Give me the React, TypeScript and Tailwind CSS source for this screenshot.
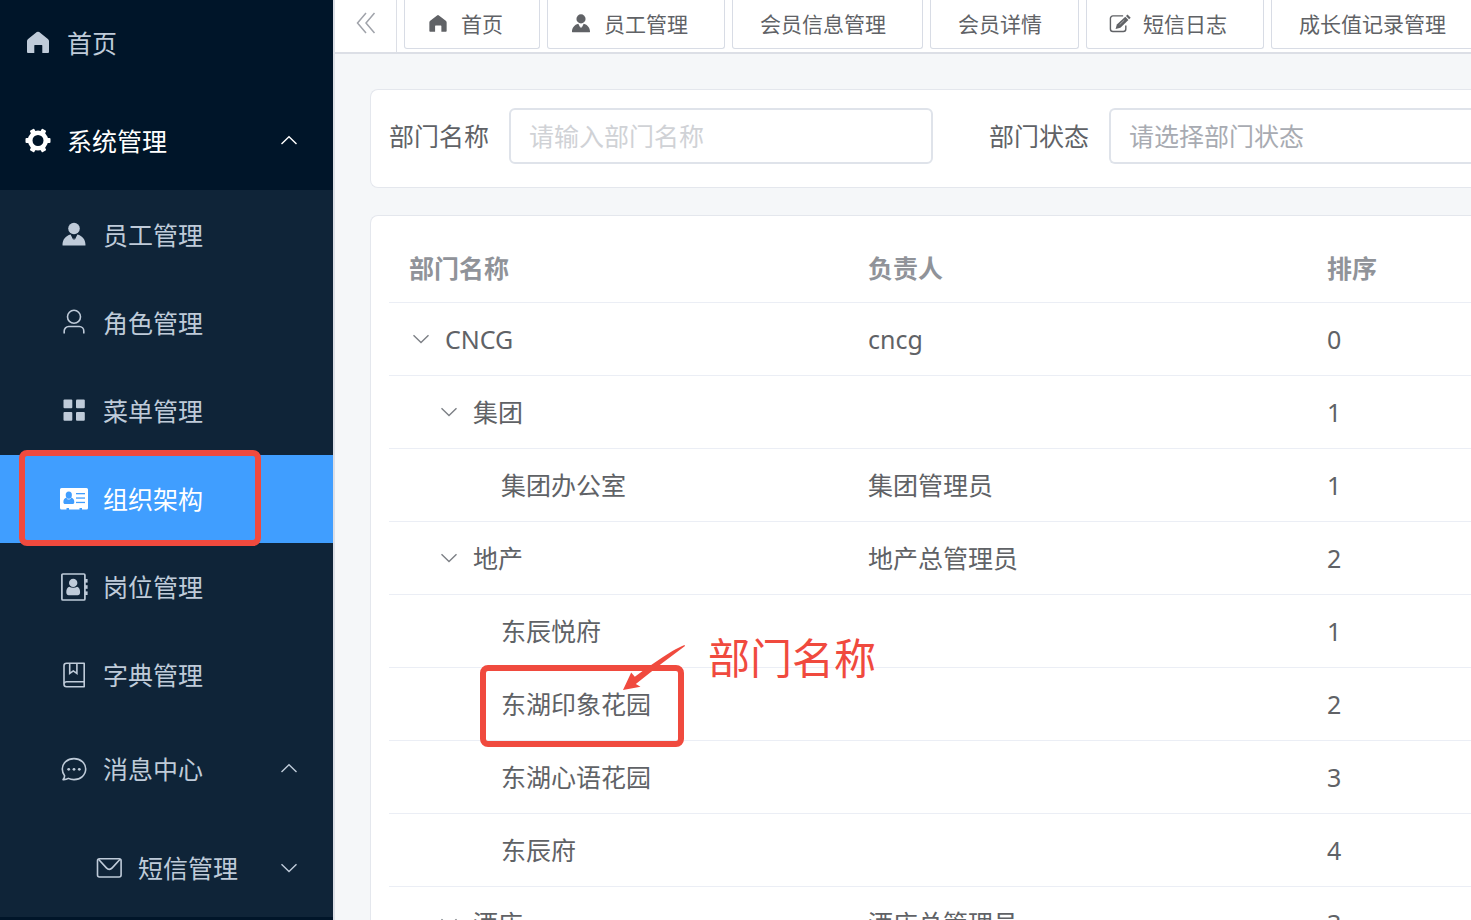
import React, { useState } from "react";

type IconProps = { className?: string };

const HomeIcon: React.FC<IconProps> = ({ className }) => (
  <svg viewBox="0 0 28 28" className={className} fill="currentColor" aria-hidden="true">
    <path d="M12.8 3.1a2 2 0 0 1 2.4 0l8.7 6.8a2.8 2.8 0 0 1 1.1 2.2V23a1 1 0 0 1-1 1h-5.7v-7.5a.5.5 0 0 0-.5-.5h-7a.5.5 0 0 0-.5.5V24H4a1 1 0 0 1-1-1V12.1a2.8 2.8 0 0 1 1.1-2.2z" />
  </svg>
);

const GearIcon: React.FC<IconProps> = ({ className }) => (
  <svg viewBox="0 0 28 28" className={className} aria-hidden="true">
    <circle cx="14" cy="13.5" r="7.8" fill="none" stroke="currentColor" strokeWidth="4.6" />
    <g fill="currentColor">
      {[0, 60, 120, 180, 240, 300].map((angle) => (
        <rect key={angle} x="22" y="11" width="4.5" height="5" rx="1" transform={`rotate(${angle} 14 13.5)`} />
      ))}
    </g>
  </svg>
);

const UserSolidIcon: React.FC<IconProps> = ({ className }) => (
  <svg viewBox="0 0 28 28" className={className} fill="currentColor" aria-hidden="true">
    <circle cx="14" cy="7.500" r="5.800" />
    <path d="M10.600 13.600 13.300 19 14 16.800 14.700 19 17.400 13.600c5 1.200 8.100 5.100 8.100 10.400a.5.5 0 0 1-.5.5H3a.5.5 0 0 1-.5-.5c0-5.300 3.100-9.200 8.100-10.400z" />
  </svg>
);

const UserIcon: React.FC<IconProps> = ({ className }) => (
  <svg viewBox="0 0 28 28" className={className} fill="none" stroke="currentColor" strokeWidth="1.6" aria-hidden="true">
    <circle cx="14" cy="7.8" r="6.5" />
    <path d="M4.200 24.500V22a4.500 4.500 0 0 1 4.500-4.500h10.600a4.500 4.500 0 0 1 4.500 4.500v2.500" />
  </svg>
);

const GridIcon: React.FC<IconProps> = ({ className }) => (
  <svg viewBox="0 0 28 28" className={className} fill="currentColor" aria-hidden="true">
    <rect x="3.5" y="2.5" width="8.800" height="8.800" rx="1" />
    <rect x="16" y="2.5" width="8.800" height="8.800" rx="1" />
    <rect x="3.5" y="15" width="8.800" height="8.800" rx="1" />
    <rect x="16" y="15" width="8.800" height="8.800" rx="1" />
  </svg>
);

const IdCardIcon: React.FC<IconProps> = ({ className }) => (
  <svg viewBox="0 0 28 28" className={className} aria-hidden="true">
    <path
      fill="currentColor"
      d="M1.5 3h25A1.5 1.5 0 0 1 28 4.500V23a1.5 1.5 0 0 1-1.500 1.500H22V23h-2.500v1.500H9V23H6.500v1.500h-5A1.5 1.5 0 0 1 0 23V4.500A1.5 1.5 0 0 1 1.500 3z"
    />
    <g className="fill-[#409eff]">
      <ellipse cx="8.800" cy="10" rx="3.100" ry="3.600" />
      <path d="M6.500 12.500h4.600c2.400.8 3.200 2 3.200 4.700 0 1.200-.7 1.800-1.800 1.800H5.200c-1.100 0-1.800-.6-1.800-1.800 0-2.700.8-3.900 3.100-4.700z" />
      <rect x="16" y="8" width="9" height="1.300" />
      <rect x="16" y="12.400" width="9" height="1.300" />
      <rect x="16" y="16.800" width="9" height="1.300" />
    </g>
    <path d="M6.800 13.400c1.200 1 2.800 1 4 0" fill="none" stroke="currentColor" strokeWidth=".7" />
  </svg>
);

const PostIcon: React.FC<IconProps> = ({ className }) => (
  <svg viewBox="0 0 28 28" className={className} aria-hidden="true">
    <rect x="1.900" y="1" width="23" height="26" rx="1" fill="none" stroke="currentColor" strokeWidth="1.700" />
    <g fill="currentColor">
      <rect x="25" y="6" width="2.600" height="3.600" />
      <rect x="25" y="12.200" width="2.600" height="3.600" />
      <rect x="25" y="18.400" width="2.600" height="3.600" />
      <circle cx="13.200" cy="9.900" r="4.200" />
      <path d="M9.200 13.700c2.200 1.500 5.800 1.500 8 0 2 .8 2.900 2.700 2.900 5.600 0 1.800-1 2.900-2.400 2.900h-9c-1.400 0-2.400-1.100-2.400-2.900 0-2.900.9-4.800 2.900-5.600z" />
    </g>
  </svg>
);

const BookIcon: React.FC<IconProps> = ({ className }) => (
  <svg viewBox="0 0 28 28" className={className} fill="none" stroke="currentColor" strokeWidth="1.600" aria-hidden="true">
    <path d="M6.500 2.200H24.200v23.600H6.500a2.500 2.500 0 0 1-2.500-2.500V4.700a2.500 2.500 0 0 1 2.500-2.500z" strokeLinejoin="round" />
    <path d="M4.200 22.500c.3-1.200 1-1.700 2.300-1.700h17.700" />
    <path d="M9.700 2.200v10.300l3.600-2.600 3.600 2.600V2.200" />
  </svg>
);

const ChatIcon: React.FC<IconProps> = ({ className }) => (
  <svg viewBox="0 0 28 28" className={className} aria-hidden="true">
    <path
      d="M14 3.600c6.600 0 11.700 4.600 11.700 10.500S20.600 24.600 14 24.600c-2.100 0-4-.4-5.700-1.200-1.400.9-3.300 1.300-5.200 1.200.9-1.100 1.500-2.400 1.500-3.900-1.500-1.800-2.300-4.100-2.300-6.600C2.300 8.200 7.400 3.600 14 3.600z"
      fill="none"
      stroke="currentColor"
      strokeWidth="1.600"
      strokeLinejoin="round"
    />
    <g fill="currentColor">
      <circle cx="8.700" cy="14.300" r="1.400" />
      <circle cx="14" cy="14.300" r="1.400" />
      <circle cx="19.300" cy="14.300" r="1.400" />
    </g>
  </svg>
);

const MailIcon: React.FC<IconProps> = ({ className }) => (
  <svg viewBox="0 0 28 28" className={className} fill="none" stroke="currentColor" strokeWidth="1.600" aria-hidden="true">
    <rect x="2.500" y="4.800" width="23.600" height="18.200" rx="2" />
    <path d="M3.500 5.300 11.400 13.900c1.700 1.900 4.100 1.900 5.800 0L25.100 5.300" />
  </svg>
);

const EditIcon: React.FC<IconProps> = ({ className }) => (
  <svg viewBox="0 0 28 28" className={className} aria-hidden="true">
    <path
      d="M18 3.700H5A3.200 3.200 0 0 0 1.800 6.900v13.500A3.200 3.200 0 0 0 5 23.600h13.200a3.200 3.200 0 0 0 3.200-3.200V16"
      fill="none"
      stroke="currentColor"
      strokeWidth="1.800"
    />
    <path d="M21.600 3.800 23.600 1.900 27.600 6 25.600 8z" fill="currentColor" />
    <path d="M20.700 4.700 24.700 8.900 14.500 18.700 8.400 20.400 10 14.500z" fill="currentColor" />
    <path d="M13.500 14.800 19.500 9" stroke="white" strokeWidth=".6" />
  </svg>
);

const ChevronIcon: React.FC<IconProps & { up?: boolean }> = ({ className, up }) => (
  <svg viewBox="0 0 24 24" className={className} fill="none" stroke="currentColor" strokeWidth="1.400" aria-hidden="true">
    <path d={up ? "M4.500 15 12 7.800 19.500 15" : "M4.500 8.300 12 15.500 19.500 8.300"} />
  </svg>
);

const CollapseIcon: React.FC<IconProps> = ({ className }) => (
  <svg viewBox="0 0 24 24" className={className} fill="none" stroke="currentColor" strokeWidth="1.500" aria-hidden="true">
    <path d="M12 2 3.500 12 12 22M20.500 2 12 12 20.500 22" />
  </svg>
);

const subItems = [
  { label: "员工管理", Icon: UserSolidIcon },
  { label: "角色管理", Icon: UserIcon },
  { label: "菜单管理", Icon: GridIcon },
  { label: "组织架构", Icon: IdCardIcon },
  { label: "岗位管理", Icon: PostIcon },
  { label: "字典管理", Icon: BookIcon },
];

const tabs: { label: string; Icon?: React.FC<IconProps> }[] = [
  { label: "首页", Icon: HomeIcon },
  { label: "员工管理", Icon: UserSolidIcon },
  { label: "会员信息管理" },
  { label: "会员详情" },
  { label: "短信日志", Icon: EditIcon },
  { label: "成长值记录管理" },
];

type Department = {
  name: string;
  leader?: string;
  sort: number;
  level: number;
  expandable?: boolean;
  marked?: boolean;
};

const departments: Department[] = [
  { name: "CNCG", leader: "cncg", sort: 0, level: 0, expandable: true },
  { name: "集团", sort: 1, level: 1, expandable: true },
  { name: "集团办公室", leader: "集团管理员", sort: 1, level: 2 },
  { name: "地产", leader: "地产总管理员", sort: 2, level: 1, expandable: true },
  { name: "东辰悦府", sort: 1, level: 2 },
  { name: "东湖印象花园", sort: 2, level: 2, marked: true },
  { name: "东湖心语花园", sort: 3, level: 2 },
  { name: "东辰府", sort: 4, level: 2 },
  { name: "酒店", leader: "酒店总管理员", sort: 3, level: 1, expandable: true },
];

const indents = ["pl-5", "pl-12", "pl-[76px]"];

const Sidebar: React.FC<{ active: string; onSelect: (label: string) => void }> = ({ active, onSelect }) => (
  <aside className="w-[335px] shrink-0 overflow-hidden border-r-2 border-[#dcdfe6] bg-[#001529] text-[#bfcbd9]">
    <nav className="-mt-1.5">
      <a href="#home" className="flex h-[98px] items-center gap-[15px] pl-6">
        <HomeIcon className="size-7" />
        首页
      </a>
      <button type="button" className="flex h-[98px] w-full items-center gap-[15px] pl-6 pr-8 text-white">
        <GearIcon className="size-7" />
        系统管理
        <ChevronIcon up className="ml-auto size-6" />
      </button>
      <ul className="bg-[#0f2438] pt-px">
        {subItems.map(({ label, Icon }) => (
          <li key={label} className="relative">
            <a
              href="#menu"
              onClick={() => onSelect(label)}
              className={`flex h-[88px] items-center gap-[15px] pl-[60px] ${active === label ? "bg-[#409eff] text-white" : ""}`}
            >
              <Icon className="size-7" />
              {label}
            </a>
            {label === "组织架构" && (
              <span className="pointer-events-none absolute -top-[5px] left-[19px] z-10 h-24 w-[242px] rounded-lg border-6 border-[#f04a3e]" />
            )}
          </li>
        ))}
        <li>
          <button type="button" className="flex h-[100px] w-full items-center gap-[15px] pl-[60px] pr-8">
            <ChatIcon className="size-7" />
            消息中心
            <ChevronIcon up className="ml-auto size-6" />
          </button>
        </li>
        <li>
          <button type="button" className="flex h-[98px] w-full items-center gap-[15px] pl-[95px] pr-8">
            <MailIcon className="size-7" />
            短信管理
            <ChevronIcon className="ml-auto size-6" />
          </button>
        </li>
      </ul>
    </nav>
  </aside>
);

const TabBar: React.FC = () => (
  <header className="flex h-[54px] shrink-0 overflow-hidden border-b-2 border-[#dcdfe6] bg-white">
    <button
      type="button"
      aria-label="收起菜单"
      className="flex w-[62px] shrink-0 items-center justify-center border-r border-[#dcdfe6] pb-1.5 text-[#a0a3aa]"
    >
      <CollapseIcon className="size-6" />
    </button>
    <div className="ml-[7px] flex gap-[7px] text-[21px] leading-7">
      {tabs.map(({ label, Icon }) => (
        <button
          key={label}
          type="button"
          className={`flex h-[49px] shrink-0 items-center gap-3 whitespace-nowrap rounded-b-[3px] border border-t-0 border-[#d8dce5] pb-px pr-9 ${
            Icon ? "pl-[22px]" : "pl-[27px]"
          }`}
        >
          {Icon && <Icon className="size-[22px]" />}
          {label}
        </button>
      ))}
    </div>
  </header>
);

const SearchForm: React.FC = () => {
  const [name, setName] = useState("");
  const [status, setStatus] = useState("");

  return (
    <form className="flex h-[99px] items-center rounded-l-lg border-y border-l border-[#e4e7ed] bg-white pb-1.5 pl-[18px]">
      <label htmlFor="dept-name" className="mr-5 shrink-0">
        部门名称
      </label>
      <input
        id="dept-name"
        type="text"
        value={name}
        onChange={(event) => setName(event.target.value)}
        placeholder="请输入部门名称"
        className="mr-14 h-14 w-[424px] shrink-0 rounded-md border-2 border-[#dfe3ea] px-[18px] placeholder:text-[#d0d2d6]"
      />
      <label htmlFor="dept-status" className="mr-5 shrink-0">
        部门状态
      </label>
      <select
        id="dept-status"
        value={status}
        onChange={(event) => setStatus(event.target.value)}
        className="h-14 min-w-0 flex-1 appearance-none rounded-l-md border-2 border-r-0 border-[#dfe3ea] bg-white px-[18px] text-[#a8abb2]"
      >
        <option value="">请选择部门状态</option>
        <option value="1">启用</option>
        <option value="0">停用</option>
      </select>
    </form>
  );
};

// Red callout drawn over the department row
const Callout: React.FC = () => (
  <div className="pointer-events-none absolute -top-[3px] left-[91px] z-10 h-[82px] w-[204px] rounded-lg border-6 border-[#f04a3e]">
    <svg viewBox="0 0 64 48" className="absolute -top-[27px] left-[136px] h-12 w-16" fill="#f04a3e" aria-hidden="true">
      <path d="M62.500 1C55 4 46 9.500 38 15L24.700 24 12.800 32.700 9.200 28.500 1 46 18.500 42.700 13.800 40 28 28.800 39.700 19.500 63 2z" />
    </svg>
    <span className="absolute -top-[38px] left-[222px] whitespace-nowrap text-[42px] leading-[50px] text-[#f04a3e]">部门名称</span>
  </div>
);

const DepartmentTable: React.FC = () => (
  <section className="mt-[27px] rounded-tl-lg border-l border-t border-[#e4e7ed] bg-white pl-[18px] pt-[18px]">
    <table className="w-full table-fixed border-separate border-spacing-0 text-left">
      <colgroup>
        <col className="w-[459px]" />
        <col className="w-[459px]" />
        <col />
      </colgroup>
      <thead>
        <tr className="h-[69px] text-[#909399]">
          <th className="border-b border-[#ebeef5] pl-5 font-bold">部门名称</th>
          <th className="border-b border-[#ebeef5] pl-5 font-bold">负责人</th>
          <th className="border-b border-[#ebeef5] pl-5 font-bold">排序</th>
        </tr>
      </thead>
      <tbody>
        {departments.map((dept) => (
          <tr key={dept.name} className="h-[73px]">
            <td className={`relative border-b border-[#ebeef5] ${indents[dept.level]}`}>
              <div className="flex items-center">
                {dept.expandable ? (
                  <button type="button" aria-label={`收起${dept.name}`} className="mr-3 w-6 text-[#7d8086]">
                    <ChevronIcon className="size-6" />
                  </button>
                ) : (
                  <span className="mr-3 w-6" />
                )}
                {dept.name}
              </div>
              {dept.marked && <Callout />}
            </td>
            <td className="border-b border-[#ebeef5] pl-5">{dept.leader}</td>
            <td className="border-b border-[#ebeef5] pl-5">{dept.sort}</td>
          </tr>
        ))}
      </tbody>
    </table>
  </section>
);

const App: React.FC = () => {
  const [active, setActive] = useState("组织架构");

  return (
    <div className="flex h-screen overflow-hidden bg-[#f5f7f9] font-['Noto_Sans','Noto_Sans_CJK_SC',sans-serif] text-[25px] leading-9 text-[#606266]">
      <Sidebar active={active} onSelect={setActive} />
      <div className="flex min-w-0 flex-1 flex-col">
        <TabBar />
        <main className="min-h-0 flex-1 overflow-hidden pl-[35px] pt-[35px]">
          <SearchForm />
          <DepartmentTable />
        </main>
      </div>
    </div>
  );
};

export default App;
